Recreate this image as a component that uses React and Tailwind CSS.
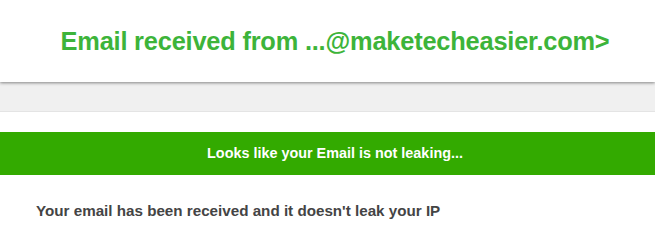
export default function App() {
  return (
    <div className="w-[655px] h-[248px] bg-white overflow-hidden" style={{ fontFamily: '"Liberation Sans", Arial, sans-serif' }}>
      <div className="h-[82px] flex items-center justify-center pl-[15px] relative z-10 shadow-[0_1px_3px_rgba(0,0,0,0.45)] bg-white">
        <h1 className="text-[25.4px] font-bold text-[#3db43a] tracking-[-0.2px]">Email received from ...@maketecheasier.com&gt;</h1>
      </div>
      <div className="h-[30px] bg-[#f0f0f0] border-b border-[#e4e4e4]"></div>
      <div className="h-[20px]"></div>
      <div className="h-[43px] bg-[#33aa00] flex items-center justify-center pl-[15px]">
        <span className="text-[14.4px] font-bold text-white">Looks like your Email is not leaking...</span>
      </div>
      <div className="pt-[25px] pl-[36px]">
        <p className="text-[15.2px] font-bold text-[#444]">Your email has been received and it doesn't leak your IP</p>
      </div>
    </div>
  );
}
